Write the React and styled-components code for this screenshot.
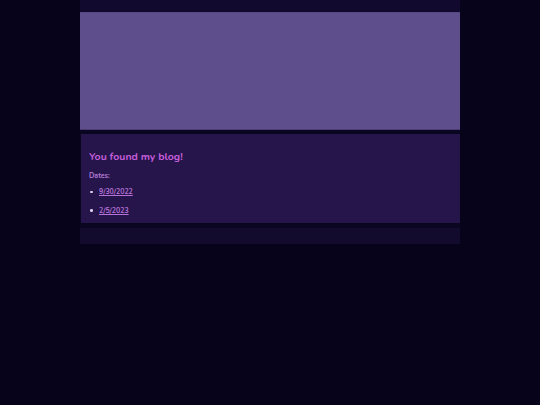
import React from "react";
import styled, { createGlobalStyle } from "styled-components";

const Global = createGlobalStyle`
  html, body { margin: 0; padding: 0; background: #07031a; }
  body { font-family: "Nunito", Lato, "Noto Sans", sans-serif; }
`;

const Page = styled.div`
  width: 380px;
  margin: 0 auto;
  display: flex;
  flex-direction: column;
  background: #0a0520;
`;

const Header = styled.header`
  height: 12px;
  background: #120a2e;
`;

const Hero = styled.div`
  background: #5e4f8c;
  border-top: 1px solid #56477f;
  border-bottom: 1px solid #4b3d74;
  box-sizing: border-box;
  height: 118px;
`;

const Card = styled.main`
  margin: 4px 0 0 1px;
  height: 89px;
  box-sizing: border-box;
  background: #25154a;
  padding: 16px 9px 0 8px;
`;

const Title = styled.h1`
  margin: 0;
  font-size: 10.5px;
  font-weight: 700;
  color: #c55ddb;
  line-height: 13px;
`;

const Label = styled.div`
  margin-top: 8px;
  font-size: 7px;
  font-weight: 700;
  color: #b67ad6;
  line-height: 9px;
`;

const List = styled.ul`
  margin: 7px 0 0 0;
  padding: 0 0 0 10px;
  list-style: none;
  display: flex;
  flex-direction: column;
  gap: 9.5px;
`;

const Item = styled.li`
  position: relative;
  font-size: 7px;
  line-height: 9px;
  font-weight: 700;
  &::before {
    content: "";
    position: absolute;
    left: -9px;
    top: 3.5px;
    width: 2.5px;
    height: 2.5px;
    border-radius: 50%;
    background: #d9cfee;
  }
`;

const Link = styled.a`
  color: #b672d8;
  text-decoration: underline;
`;

const Footer = styled.footer`
  margin-top: 5px;
  height: 16px;
  background: #130b2e;
`;

export default function App() {
  return (
    <>
      <Global />
      <Page>
        <Header />
        <Hero />
        <Card>
          <Title>You found my blog!</Title>
          <Label>Dates:</Label>
          <List>
            <Item><Link href="#">9/30/2022</Link></Item>
            <Item><Link href="#">2/5/2023</Link></Item>
          </List>
        </Card>
        <Footer />
      </Page>
    </>
  );
}
